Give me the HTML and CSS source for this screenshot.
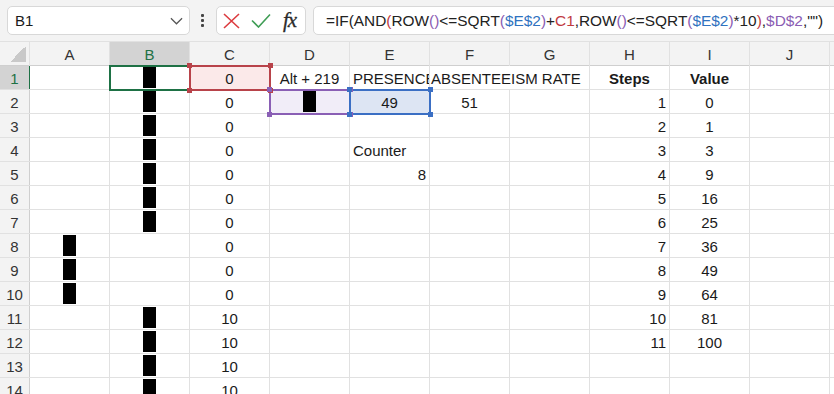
FILE: index.html
```html
<!DOCTYPE html>
<html lang="en">
<head>
  <meta charset="UTF-8">
  <meta name="viewport" content="width=device-width, initial-scale=1.0">
  <link rel="stylesheet" href="styles.css">
</head>
<body>
  <div class="toolbar">
    <div class="namebox">
      <span>B1</span>
      <svg class="chevron" viewBox="0 0 14 8"><path d="M1 1l6 6 6-6"/></svg>
    </div>
    <div class="grip"><i></i><i></i><i></i></div>
    <div class="fxbox">
      <svg class="icon-x" viewBox="0 0 17 16"><path d="M1 1L16 15M16 1L1 15"/></svg>
      <svg class="icon-ok" viewBox="0 0 20 15"><path d="M1 7.5L7.5 14L19 1.5"/></svg>
      <span class="fx">fx</span>
    </div>
    <div class="formula">=IF(AND<span class="p1">(</span>ROW<span class="p2">()</span>&lt;=SQRT<span class="p2">(</span><span class="rb">$E$2</span><span class="p2">)</span>+<span class="rr">C1</span>,ROW<span class="p2">()</span>&lt;=SQRT<span class="p2">(</span><span class="rb">$E$2</span><span class="p2">)</span>*10<span class="p1">)</span>,<span class="rp">$D$2</span>,"")</div>
  </div>

  <div class="sheet">
    <!-- column headers -->
    <div class="hd corner"><span class="tri"></span></div>
    <div class="hd">A</div><div class="hd on">B</div><div class="hd">C</div><div class="hd">D</div><div class="hd">E</div>
    <div class="hd">F</div><div class="hd">G</div><div class="hd">H</div><div class="hd">I</div><div class="hd">J</div><div class="hd"></div>

    <!-- 1 -->
    <div class="cell rh on">1</div>
    <div class="cell"></div>
    <div class="cell c sel"><span class="blk">█</span></div>
    <div class="cell c ref red">0</div>
    <div class="cell c">Alt + 219</div>
    <div class="cell clip">PRESENCE</div>
    <div class="cell span2">ABSENTEEISM RATE</div>
    <div class="cell c b">Steps</div>
    <div class="cell c b">Value</div>
    <div class="cell"></div><div class="cell"></div>

    <!-- 2 -->
    <div class="cell rh">2</div>
    <div class="cell"></div>
    <div class="cell c"><span class="blk">█</span></div>
    <div class="cell c">0</div>
    <div class="cell c ref purple"><span class="blk">█</span></div>
    <div class="cell c ref blue">49</div>
    <div class="cell c">51</div>
    <div class="cell"></div>
    <div class="cell r">1</div>
    <div class="cell c">0</div>
    <div class="cell"></div><div class="cell"></div>

    <!-- 3 -->
    <div class="cell rh">3</div>
    <div class="cell"></div>
    <div class="cell c"><span class="blk">█</span></div>
    <div class="cell c">0</div>
    <div class="cell"></div><div class="cell"></div><div class="cell"></div><div class="cell"></div>
    <div class="cell r">2</div>
    <div class="cell c">1</div>
    <div class="cell"></div><div class="cell"></div>

    <!-- 4 -->
    <div class="cell rh">4</div>
    <div class="cell"></div>
    <div class="cell c"><span class="blk">█</span></div>
    <div class="cell c">0</div>
    <div class="cell"></div>
    <div class="cell">Counter</div>
    <div class="cell"></div><div class="cell"></div>
    <div class="cell r">3</div>
    <div class="cell c">3</div>
    <div class="cell"></div><div class="cell"></div>

    <!-- 5 -->
    <div class="cell rh">5</div>
    <div class="cell"></div>
    <div class="cell c"><span class="blk">█</span></div>
    <div class="cell c">0</div>
    <div class="cell"></div>
    <div class="cell r">8</div>
    <div class="cell"></div><div class="cell"></div>
    <div class="cell r">4</div>
    <div class="cell c">9</div>
    <div class="cell"></div><div class="cell"></div>

    <!-- 6 -->
    <div class="cell rh">6</div>
    <div class="cell"></div>
    <div class="cell c"><span class="blk">█</span></div>
    <div class="cell c">0</div>
    <div class="cell"></div><div class="cell"></div><div class="cell"></div><div class="cell"></div>
    <div class="cell r">5</div>
    <div class="cell c">16</div>
    <div class="cell"></div><div class="cell"></div>

    <!-- 7 -->
    <div class="cell rh">7</div>
    <div class="cell"></div>
    <div class="cell c"><span class="blk">█</span></div>
    <div class="cell c">0</div>
    <div class="cell"></div><div class="cell"></div><div class="cell"></div><div class="cell"></div>
    <div class="cell r">6</div>
    <div class="cell c">25</div>
    <div class="cell"></div><div class="cell"></div>

    <!-- 8 -->
    <div class="cell rh">8</div>
    <div class="cell c"><span class="blk">█</span></div>
    <div class="cell"></div>
    <div class="cell c">0</div>
    <div class="cell"></div><div class="cell"></div><div class="cell"></div><div class="cell"></div>
    <div class="cell r">7</div>
    <div class="cell c">36</div>
    <div class="cell"></div><div class="cell"></div>

    <!-- 9 -->
    <div class="cell rh">9</div>
    <div class="cell c"><span class="blk">█</span></div>
    <div class="cell"></div>
    <div class="cell c">0</div>
    <div class="cell"></div><div class="cell"></div><div class="cell"></div><div class="cell"></div>
    <div class="cell r">8</div>
    <div class="cell c">49</div>
    <div class="cell"></div><div class="cell"></div>

    <!-- 10 -->
    <div class="cell rh">10</div>
    <div class="cell c"><span class="blk">█</span></div>
    <div class="cell"></div>
    <div class="cell c">0</div>
    <div class="cell"></div><div class="cell"></div><div class="cell"></div><div class="cell"></div>
    <div class="cell r">9</div>
    <div class="cell c">64</div>
    <div class="cell"></div><div class="cell"></div>

    <!-- 11 -->
    <div class="cell rh">11</div>
    <div class="cell"></div>
    <div class="cell c"><span class="blk">█</span></div>
    <div class="cell c">10</div>
    <div class="cell"></div><div class="cell"></div><div class="cell"></div><div class="cell"></div>
    <div class="cell r">10</div>
    <div class="cell c">81</div>
    <div class="cell"></div><div class="cell"></div>

    <!-- 12 -->
    <div class="cell rh">12</div>
    <div class="cell"></div>
    <div class="cell c"><span class="blk">█</span></div>
    <div class="cell c">10</div>
    <div class="cell"></div><div class="cell"></div><div class="cell"></div><div class="cell"></div>
    <div class="cell r">11</div>
    <div class="cell c">100</div>
    <div class="cell"></div><div class="cell"></div>

    <!-- 13 -->
    <div class="cell rh">13</div>
    <div class="cell"></div>
    <div class="cell c"><span class="blk">█</span></div>
    <div class="cell c">10</div>
    <div class="cell"></div><div class="cell"></div><div class="cell"></div><div class="cell"></div>
    <div class="cell"></div><div class="cell"></div><div class="cell"></div><div class="cell"></div>

    <!-- 14 -->
    <div class="cell rh">14</div>
    <div class="cell"></div>
    <div class="cell c"><span class="blk">█</span></div>
    <div class="cell c">10</div>
    <div class="cell"></div><div class="cell"></div><div class="cell"></div><div class="cell"></div>
    <div class="cell"></div><div class="cell"></div><div class="cell"></div><div class="cell"></div>
  </div>
</body>
</html>
```

FILE: styles.css
```css
:root {
  --grid-line: #e1e1e1;
  --chrome-bg: #f3f3f3;
  --header-sel: #d3d3d3;
  --excel-green: #1e7145;
  --ref-red: #b8434a;
  --ref-purple: #8a5fb5;
  --ref-blue: #3b6fc4;
  --text: #1a1a1a;
}

body {
  margin: 0;
  width: 834px;
  height: 394px;
  overflow: hidden;
  background: #fff;
  font-family: 'Liberation Sans', Arial, sans-serif;
  color: var(--text);
}

/* top formula bar */
.toolbar {
  display: flex;
  align-items: center;
  height: 41px;
  padding-left: 7px;
  background: var(--chrome-bg);
}

.namebox,
.fxbox,
.formula {
  box-sizing: border-box;
  height: 29px;
  background: #fff;
  border: 1px solid #d8d8d8;
  border-radius: 5px;
  display: flex;
  align-items: center;
}

.namebox {
  width: 183px;
  padding: 0 6px 0 7px;
  justify-content: space-between;
  font-size: 15px;
}

.chevron {
  width: 13px;
  height: 8px;
  fill: none;
  stroke: #555;
  stroke-width: 1.3;
}

.grip {
  display: flex;
  flex-direction: column;
  gap: 2px;
  margin: 0 12px 0 11px;
}

.grip i {
  width: 3px;
  height: 3px;
  background: #444;
  border-radius: 1px;
}

.fxbox {
  width: 90px;
  padding-left: 6px;
  gap: 11px;
}

.icon-x {
  width: 17px;
  height: 16px;
  fill: none;
  stroke: #dc3b3f;
  stroke-width: 1.6;
}

.icon-ok {
  width: 20px;
  height: 15px;
  fill: none;
  stroke: #3f9d55;
  stroke-width: 1.6;
}

.fx {
  font-family: 'Liberation Serif', serif;
  font-style: italic;
  font-size: 21px;
  color: #2b2b2b;
  margin-left: 1px;
  letter-spacing: -1px;
  -webkit-text-stroke: 0.3px #2b2b2b;
}

.formula {
  flex: 1;
  margin-left: 7px;
  margin-right: -12px;
  padding-left: 12px;
  font-size: 15.4px;
  white-space: nowrap;
  color: #222;
}

.p1, .rr { color: #bf3a3f; }
.p2, .rp { color: #8a5cb3; }
.rb { color: #2f72c0; }

/* grid */
.sheet {
  display: grid;
  grid-template-columns: 29px repeat(11, 79px);
  grid-auto-rows: 23px;
  gap: 1px;
  padding-top: 1px;
  background: var(--grid-line);
  font-size: 15px;
}

.hd {
  background: var(--chrome-bg);
  display: flex;
  align-items: center;
  justify-content: center;
  padding-top: 1px;
  color: #333;
  box-shadow: 0 1px 0 #cfcfcf;
}

.hd.on {
  background: var(--header-sel);
  color: var(--excel-green);
}

.corner {
  justify-content: flex-end;
  align-items: flex-end;
  padding: 0 3px 3px 0;
}

.tri {
  width: 16px;
  height: 16px;
  background: linear-gradient(to bottom right, transparent 50%, #c9c9c9 50%);
}

.cell {
  background: #fff;
  display: flex;
  align-items: flex-end;
  padding: 0 3px;
  line-height: 20px;
  white-space: nowrap;
  position: relative;
}

.cell.c { justify-content: center; }
.cell.r { justify-content: flex-end; }
.cell.b { font-weight: bold; }
.cell.clip { overflow: hidden; }
.cell.span2 { grid-column: span 2; padding-left: 1px; }

.rh {
  background: var(--chrome-bg);
  justify-content: center;
  padding: 0;
  color: #333;
  box-shadow: 1px 0 0 #cfcfcf;
}

.rh.on {
  background: var(--header-sel);
  color: var(--excel-green);
  box-shadow: 1px 0 0 var(--excel-green);
}

.blk {
  display: inline-block;
  width: 13px;
  height: 21px;
  margin-bottom: 1px;
  overflow: hidden;
  background: #000;
  color: #000;
  font-size: 12px;
  line-height: 21px;
}

/* active cell and formula reference boxes */
.sel::after,
.ref::after {
  content: '';
  position: absolute;
  left: -1px;
  top: -1px;
  right: -2px;
  bottom: -2px;
  border: 2px solid var(--excel-green);
  z-index: 2;
}

.ref::before {
  content: '';
  position: absolute;
  left: -3px;
  top: -3px;
  right: -4px;
  bottom: -4px;
  z-index: 3;
  background:
    linear-gradient(var(--c), var(--c)) left top / 5px 5px no-repeat,
    linear-gradient(var(--c), var(--c)) right top / 5px 5px no-repeat,
    linear-gradient(var(--c), var(--c)) left bottom / 5px 5px no-repeat,
    linear-gradient(var(--c), var(--c)) right bottom / 5px 5px no-repeat;
}

.ref.red { --c: var(--ref-red); background: #fbe9e9; }
.ref.purple { --c: var(--ref-purple); background: #f1edf8; }
.ref.blue { --c: var(--ref-blue); background: #dde5f3; }

.ref::after { border-color: var(--c); }
```
